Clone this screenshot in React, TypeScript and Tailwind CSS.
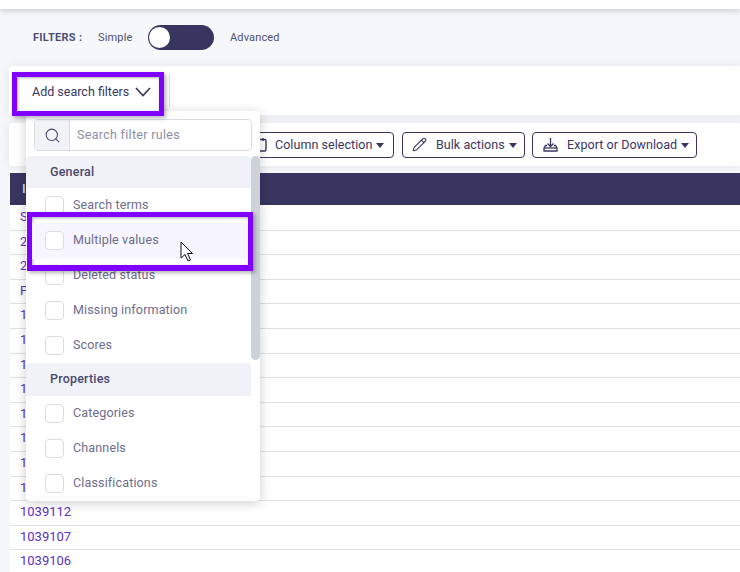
import { Pencil, Search } from "lucide-react";
import React from "react";

const rows = [
    "SKU-204", "2039118", "2039117", "P-10392", "1039124", "1039123", "1039122",
    "1039121", "1039120", "1039119", "1039118", "1039115", "1039112", "1039107", "1039106",
];

const Caret = () => (
    <span className="ml-[4px] inline-block shrink-0 border-x-4 border-t-[5px] border-x-transparent border-t-[#383660]" />
);

const Checkbox = () => (
    <span className="size-[19px] shrink-0 rounded border border-[#d9dce6] bg-white" />
);

const FilterRow = ({ label }: { label: string }) => (
    <div className="flex h-[35px] shrink-0 items-center gap-[9px] pl-[19px] text-[12.5px] tracking-[0.15px] whitespace-nowrap text-[#6d6c8c]">
        <Checkbox />
        <span className="pb-px">{label}</span>
    </div>
);

const GroupHeader = ({ label, className }: { label: string; className: string }) => (
    <div className={`flex shrink-0 items-center rounded-t-sm bg-[#f1f2f7] pl-6 text-[12.5px] font-medium tracking-[0.2px] text-[#4a4970] ${className}`}>
        {label}
    </div>
);

const ToolButton: React.FC<{ icon: React.ReactNode; label: string; className: string }> = ({
    icon,
    label,
    className,
}) => (
    <button className={`flex h-[26px] items-center rounded border border-[#383660] bg-white text-[12.5px] tracking-[0.05px] whitespace-nowrap text-[#383660] ${className}`}>
        {icon}
        <span className="flex items-center pt-px">
            {label}
            <Caret />
        </span>
    </button>
);

export default function App() {
    return (
        <div className="relative h-[572px] w-[740px] overflow-hidden bg-[#f5f7fa] font-['Roboto',sans-serif]">
            <div className="h-[9px] bg-white shadow-[0_2px_6px_rgba(0,0,0,0.18)]" />

            <div className="flex h-[57px] items-center pl-[33px] text-[11px] tracking-[0.15px] text-[#4f4e74]">
                <span className="w-[65px] pt-px font-bold tracking-[0.3px]">FILTERS :</span>
                <span className="w-[50px] pt-px">Simple</span>
                <div className="flex h-[25px] w-[66px] items-center rounded-full bg-[#383660] pl-[1px]">
                    <span className="size-[21px] rounded-full bg-white" />
                </div>
                <span className="ml-4 pt-px">Advanced</span>
            </div>

            <div className="ml-[9px] flex h-[49px] items-center rounded-l bg-white shadow-[0_0_8px_2px_rgba(0,0,0,0.05)]">
                <div className="h-[33px] w-[161px] border-r border-[#dcdde3]" />
            </div>

            <div className="mt-2 ml-[9px] flex h-[43px] items-center gap-2 rounded-l bg-white pl-[236px] shadow-[0_0_8px_2px_rgba(0,0,0,0.05)]">
                <ToolButton
                    className="w-[149px] gap-[8px] pl-[7px]"
                    label="Column selection"
                    icon={
                        <svg className="shrink-0" width="14" height="15" viewBox="0 0 14 15" fill="none" stroke="#383660" strokeWidth="1.4">
                            <rect x="1" y="2.5" width="12" height="11.5" rx="1.5" />
                            <path d="M4 1v3M10 1v3" />
                        </svg>
                    }
                />
                <ToolButton
                    className="w-[123px] gap-[9px] pl-[9px]"
                    label="Bulk actions"
                    icon={<Pencil className="shrink-0" size={15} strokeWidth={1.7} />}
                />
                <ToolButton
                    className="ml-[-1px] w-[165px] gap-[9px] pl-[10px]"
                    label="Export or Download"
                    icon={
                        <svg className="shrink-0" width="15" height="15" viewBox="0 0 15 15" fill="none" stroke="#383660" strokeWidth="1.3">
                            <path d="M7.5 1v8.500M4.500 6.500l3 3 3-3" />
                            <path d="M4 8.500H2.500L1 11v3h13v-3l-1.500-2.500H11" />
                            <path d="M1 11h13" />
                        </svg>
                    }
                />
            </div>

            <div className="mt-[7px] ml-[10px]">
                <div className="flex h-8 items-center bg-[#383660] pl-3 text-[13px] font-medium text-[#cfe0f5]">ID</div>
                <div className="bg-white pt-px">
                    {rows.map((id) => (
                        <div
                            key={id}
                            className="flex h-[24.6px] items-center border-b border-[#dfe0e4] pb-[2px] pl-[10px] text-[13px] text-[#5d2fc4]"
                        >
                            {id}
                        </div>
                    ))}
                </div>
            </div>

            <div className="absolute top-[111px] left-[26px] flex h-[390px] w-[234px] flex-col rounded bg-white shadow-[0_2px_12px_rgba(0,0,0,0.2)]">
                <div className="mx-2 mt-2 flex h-8 shrink-0 rounded border border-[#d9dce3]">
                    <span className="flex w-[35px] items-center justify-center border-r border-[#d9dce3] bg-[#f2f3f7] text-[#4a4970]">
                        <Search size={17} strokeWidth={1.5} />
                    </span>
                    <span className="pl-[7px] text-[12.5px] leading-[29px] tracking-[0.3px] text-[#8e8ea6]">Search filter rules</span>
                </div>
                <div className="relative mt-[5px] flex-1 overflow-hidden">
                    <div className="w-[225px]">
                        <GroupHeader label="General" className="h-8" />
                        <FilterRow label="Search terms" />
                        <FilterRow label="Multiple values" />
                        <FilterRow label="Deleted status" />
                        <FilterRow label="Missing information" />
                        <FilterRow label="Scores" />
                        <GroupHeader label="Properties" className="h-[33px]" />
                        <FilterRow label="Categories" />
                        <FilterRow label="Channels" />
                        <FilterRow label="Classifications" />
                    </div>
                    <div className="absolute top-0 right-0 h-[204px] w-[9px] rounded-full bg-[#cdd1d8]" />
                </div>
            </div>

            <div className="absolute top-[72px] left-3 flex h-11 w-[152px] items-center border-[5px] border-[#7f00ff] bg-white pb-1 pl-[15px] text-[12.5px] whitespace-nowrap text-[#383660] shadow-[2px_2px_4px_rgba(0,0,0,0.3),inset_1px_1px_3px_rgba(0,0,0,0.3)]">
                <span>Add search filters</span>
                <svg className="ml-[6px] shrink-0" width="16" height="10" viewBox="0 0 16 10" fill="none" stroke="#383660" strokeWidth="1.6">
                    <path d="M1 1l7 7.500 7-7.500" />
                </svg>
            </div>

            <div className="absolute top-[212px] left-[27px] flex h-[59px] w-[226px] items-center border-[5px] border-b-[6px] border-[#7f00ff] bg-white shadow-[2px_2px_4px_rgba(0,0,0,0.3),inset_1px_1px_3px_rgba(0,0,0,0.3)]">
                <div className="-mt-[1px] flex h-9 w-full items-center gap-[9px] bg-[#f7f5ff] pl-[13px] text-[12.5px] tracking-[0.15px] whitespace-nowrap text-[#6d6c8c]">
                    <Checkbox />
                    <span className="pb-px">Multiple values</span>
                </div>
            </div>

            <svg className="absolute top-[241px] left-[180px]" width="14" height="22" viewBox="0 0 14 22">
                <path d="M1 1v16l4-3.5 3 6.5 2.5-1-3-6.5H12.500z" fill="#fff" stroke="#111" strokeWidth="1" />
            </svg>
        </div>
    );
}
